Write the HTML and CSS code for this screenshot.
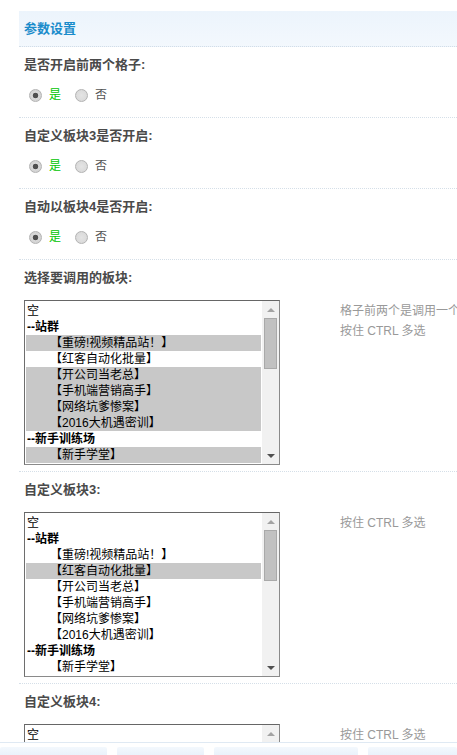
FILE: index.html
```html
<!DOCTYPE html>
<html lang="zh-CN">
<head>
<meta charset="utf-8">
<title>参数设置</title>
<link rel="stylesheet" href="styles.css">
</head>
<body>
<div class="panel">
  <div class="head">参数设置</div>

  <div class="sec">
    <div class="lbl">是否开启前两个格子:</div>
    <div class="radios">
      <span class="radio on"></span><span class="rtext yes">是</span>
      <span class="radio second"></span><span class="rtext">否</span>
    </div>
  </div>

  <div class="sec">
    <div class="lbl">自定义板块3是否开启:</div>
    <div class="radios">
      <span class="radio on"></span><span class="rtext yes">是</span>
      <span class="radio second"></span><span class="rtext">否</span>
    </div>
  </div>

  <div class="sec">
    <div class="lbl">自动以板块4是否开启:</div>
    <div class="radios">
      <span class="radio on"></span><span class="rtext yes">是</span>
      <span class="radio second"></span><span class="rtext">否</span>
    </div>
  </div>

  <div class="sec big">
    <div class="lbl">选择要调用的板块:</div>
    <div class="row">
      <div class="listbox">
        <div class="list">
          <div class="opt">空</div>
          <div class="grp">--站群</div>
          <div class="opt sub sel">【重磅!视频精品站！】</div>
          <div class="opt sub">【红客自动化批量】</div>
          <div class="opt sub sel">【开公司当老总】</div>
          <div class="opt sub sel">【手机端营销高手】</div>
          <div class="opt sub sel">【网络坑爹惨案】</div>
          <div class="opt sub sel">【2016大机遇密训】</div>
          <div class="grp">--新手训练场</div>
          <div class="opt sub sel">【新手学堂】</div>
        </div>
        <div class="sbar">
          <div class="sbtn"><span class="arr up"></span></div>
          <div class="thumb"></div>
          <div class="track"></div>
          <div class="sbtn"><span class="arr down"></span></div>
        </div>
      </div>
      <div class="hint">格子前两个是调用一个<br>按住 CTRL 多选</div>
    </div>
  </div>

  <div class="sec big">
    <div class="lbl">自定义板块3:</div>
    <div class="row">
      <div class="listbox">
        <div class="list">
          <div class="opt">空</div>
          <div class="grp">--站群</div>
          <div class="opt sub">【重磅!视频精品站！】</div>
          <div class="opt sub sel">【红客自动化批量】</div>
          <div class="opt sub">【开公司当老总】</div>
          <div class="opt sub">【手机端营销高手】</div>
          <div class="opt sub">【网络坑爹惨案】</div>
          <div class="opt sub">【2016大机遇密训】</div>
          <div class="grp">--新手训练场</div>
          <div class="opt sub">【新手学堂】</div>
        </div>
        <div class="sbar">
          <div class="sbtn"><span class="arr up"></span></div>
          <div class="thumb"></div>
          <div class="track"></div>
          <div class="sbtn"><span class="arr down"></span></div>
        </div>
      </div>
      <div class="hint">按住 CTRL 多选</div>
    </div>
  </div>

  <div class="sec big">
    <div class="lbl">自定义板块4:</div>
    <div class="row">
      <div class="listbox">
        <div class="list">
          <div class="opt">空</div>
          <div class="grp">--站群</div>
          <div class="opt sub">【重磅!视频精品站！】</div>
          <div class="opt sub">【红客自动化批量】</div>
          <div class="opt sub">【开公司当老总】</div>
          <div class="opt sub">【手机端营销高手】</div>
          <div class="opt sub">【网络坑爹惨案】</div>
          <div class="opt sub">【2016大机遇密训】</div>
          <div class="grp">--新手训练场</div>
          <div class="opt sub">【新手学堂】</div>
        </div>
        <div class="sbar">
          <div class="sbtn"><span class="arr up"></span></div>
          <div class="thumb"></div>
          <div class="track"></div>
          <div class="sbtn"><span class="arr down"></span></div>
        </div>
      </div>
      <div class="hint">按住 CTRL 多选</div>
    </div>
  </div>
</div>

<div class="footer">
  <div class="tab t1"></div>
  <div class="tab t2"></div>
  <div class="tab t3"></div>
  <div class="tab t4"></div>
</div>
</body>
</html>
```

FILE: styles.css
```css
html, body {
  margin: 0;
  padding: 0;
  overflow: hidden;
  background: #fff;
}

body {
  font-family: "Liberation Sans", "Noto Sans CJK SC", sans-serif;
  color: #333;
}

.panel {
  margin: 11px 0 0 19px;
  width: 640px;
}

.head {
  height: 35px;
  line-height: 35px;
  padding-left: 5px;
  background: linear-gradient(#ecf4fc, #f3f8fd);
  border-bottom: 1px dotted #d3dde7;
  font-size: 13px;
  font-weight: bold;
  color: #1a8ccb;
}

.sec {
  padding: 8px 0 12px 5px;
  border-bottom: 1px dotted #d5dfe8;
}

.sec.big {
  padding-bottom: 6px;
}

.lbl {
  font-size: 13px;
  font-weight: bold;
  color: #4a4a4a;
  line-height: 20px;
}

.radios {
  display: flex;
  align-items: center;
  height: 20px;
  margin-top: 10px;
  font-size: 12px;
}

.radio {
  width: 13px;
  height: 13px;
  box-sizing: border-box;
  border-radius: 50%;
  border: 1px solid #b3b3b3;
  background: radial-gradient(circle, #e4e4e4 0, #d6d6d6 100%);
  margin-left: 5px;
}

.radio.second {
  margin-left: 14px;
}

.radio.on {
  background: radial-gradient(circle, #4f4f4f 0 2.5px, #d9d9d9 3.1px, #cdcdcd 100%);
}

.rtext {
  margin-left: 7px;
  color: #555;
  line-height: 20px;
}

.rtext.yes {
  color: #00c400;
}

.row {
  display: flex;
  align-items: flex-start;
  margin-top: 12px;
}

.listbox {
  display: flex;
  width: 256px;
  height: 165px;
  box-sizing: border-box;
  border: 1px solid #8a8a8a;
  border-top-color: #666;
  border-left-color: #6e6e6e;
  background: #fff;
  overflow: hidden;
  flex: none;
}

.list {
  flex: 1;
  padding: 2px 1px 0 1px;
  overflow: hidden;
  font-size: 12px;
  color: #000;
}

.opt, .grp {
  height: 16px;
  line-height: 16px;
  padding-left: 1px;
  white-space: nowrap;
}

.grp {
  font-weight: bold;
}

.opt.sub {
  padding-left: 24px;
}

.opt.sel {
  background: #c8c8c8;
}

.sbar {
  width: 17px;
  flex: none;
  display: flex;
  flex-direction: column;
  background: #f1f1f1;
}

.sbtn {
  height: 17px;
  flex: none;
  display: flex;
  align-items: center;
  justify-content: center;
}

.arr {
  width: 0;
  height: 0;
  border-left: 4px solid transparent;
  border-right: 4px solid transparent;
}

.arr.up {
  border-bottom: 4px solid #a3a3a3;
}

.arr.down {
  border-top: 4px solid #505050;
}

.thumb {
  height: 51px;
  margin: 0 2px;
  flex: none;
  box-sizing: border-box;
  background: #c1c1c1;
  border: 1px solid #a9a9a9;
}

.track {
  flex: 1;
}

.hint {
  margin-left: 60px;
  padding-top: 1px;
  font-size: 12px;
  line-height: 20px;
  color: #999;
  white-space: nowrap;
}

.footer {
  position: fixed;
  left: 0;
  right: 0;
  bottom: 0;
  height: 12px;
  background: #fff;
  border-top: 1px solid #dfe9f3;
  display: flex;
  align-items: flex-end;
  gap: 10px;
}

.tab {
  height: 8px;
  background: linear-gradient(#f3f8fd, #eaf2fb);
  border-radius: 2px 2px 0 0;
}

.t1 { width: 107px; }
.t2 { width: 87px; }
.t3 { width: 144px; }
.t4 { flex: 1; }
```
